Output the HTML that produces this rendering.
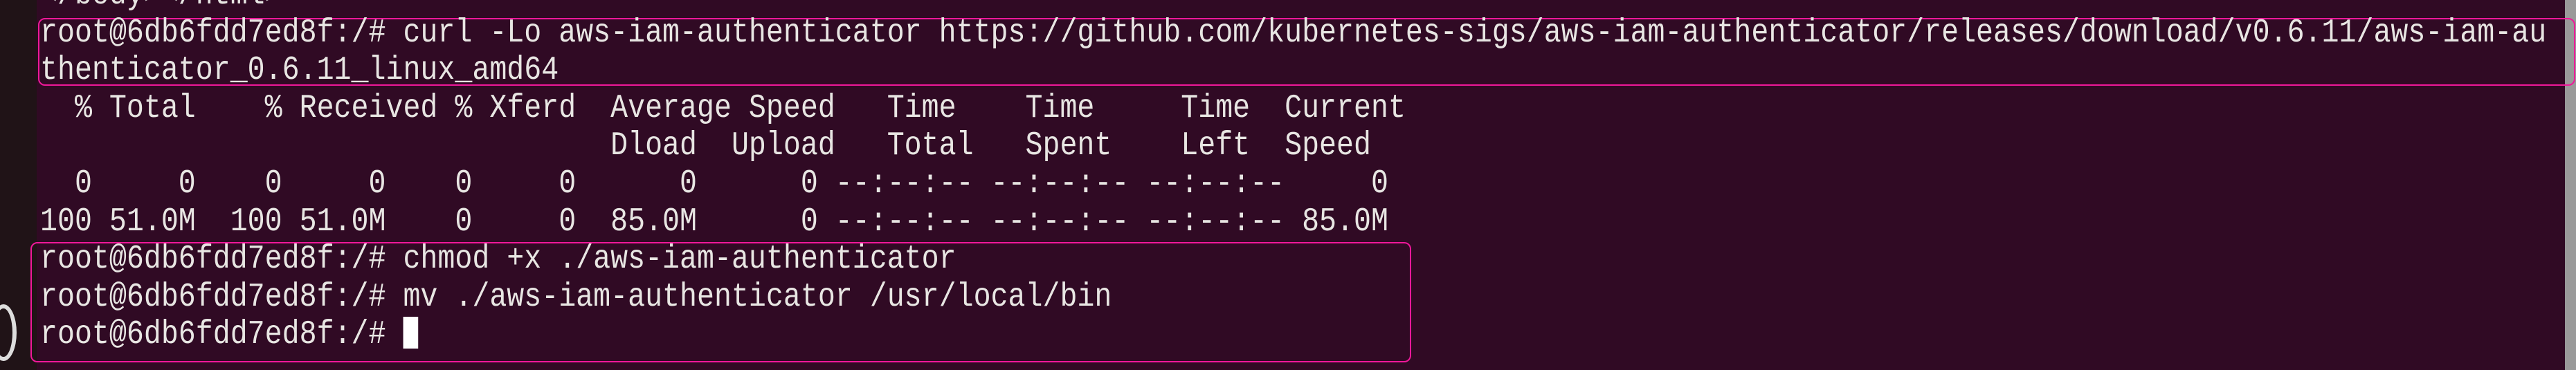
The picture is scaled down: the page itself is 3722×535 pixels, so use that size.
<!DOCTYPE html>
<html><head><meta charset="utf-8"><style>
html,body{margin:0;padding:0;width:3722px;height:535px;overflow:hidden;background:#300a24;}
.strip{position:absolute;left:0;top:0;width:53px;height:535px;background:#201317;}
.sb{position:absolute;left:3706px;top:0;width:16px;height:535px;background:#9a9a9a;}
pre{position:absolute;left:58px;top:-34px;margin:0;font-family:"Liberation Mono",monospace;font-size:48px;line-height:54.6px;color:#e8e6e3;white-space:pre;transform:scaleX(0.867);transform-origin:0 0;}
.box{position:absolute;border:2.5px solid #f0189a;border-radius:10px;box-sizing:border-box;}
.cur{display:inline-block;width:25px;height:46px;background:#fff;vertical-align:-8px;}
.logo{position:absolute;left:-14px;top:440px;width:26px;height:70px;border:6px solid #ddd;border-radius:50%;border-left-color:transparent;}
</style></head><body>
<div class="strip"></div>
<div class="logo"></div>
<div class="sb"></div>
<div class="box" style="left:55px;top:26px;width:3666px;height:98px;"></div>
<div class="box" style="left:44px;top:350px;width:1995px;height:174px;"></div>
<pre>&lt;/body&gt;&lt;/html&gt;
root@6db6fdd7ed8f:/# curl -Lo aws-iam-authenticator https://github.com/kubernetes-sigs/aws-iam-authenticator/releases/download/v0.6.11/aws-iam-au
thenticator_0.6.11_linux_amd64
  % Total    % Received % Xferd  Average Speed   Time    Time     Time  Current
                                 Dload  Upload   Total   Spent    Left  Speed
  0     0    0     0    0     0      0      0 --:--:-- --:--:-- --:--:--     0
100 51.0M  100 51.0M    0     0  85.0M      0 --:--:-- --:--:-- --:--:-- 85.0M
root@6db6fdd7ed8f:/# chmod +x ./aws-iam-authenticator
root@6db6fdd7ed8f:/# mv ./aws-iam-authenticator /usr/local/bin
root@6db6fdd7ed8f:/# <span class="cur"></span></pre>
</body></html>
